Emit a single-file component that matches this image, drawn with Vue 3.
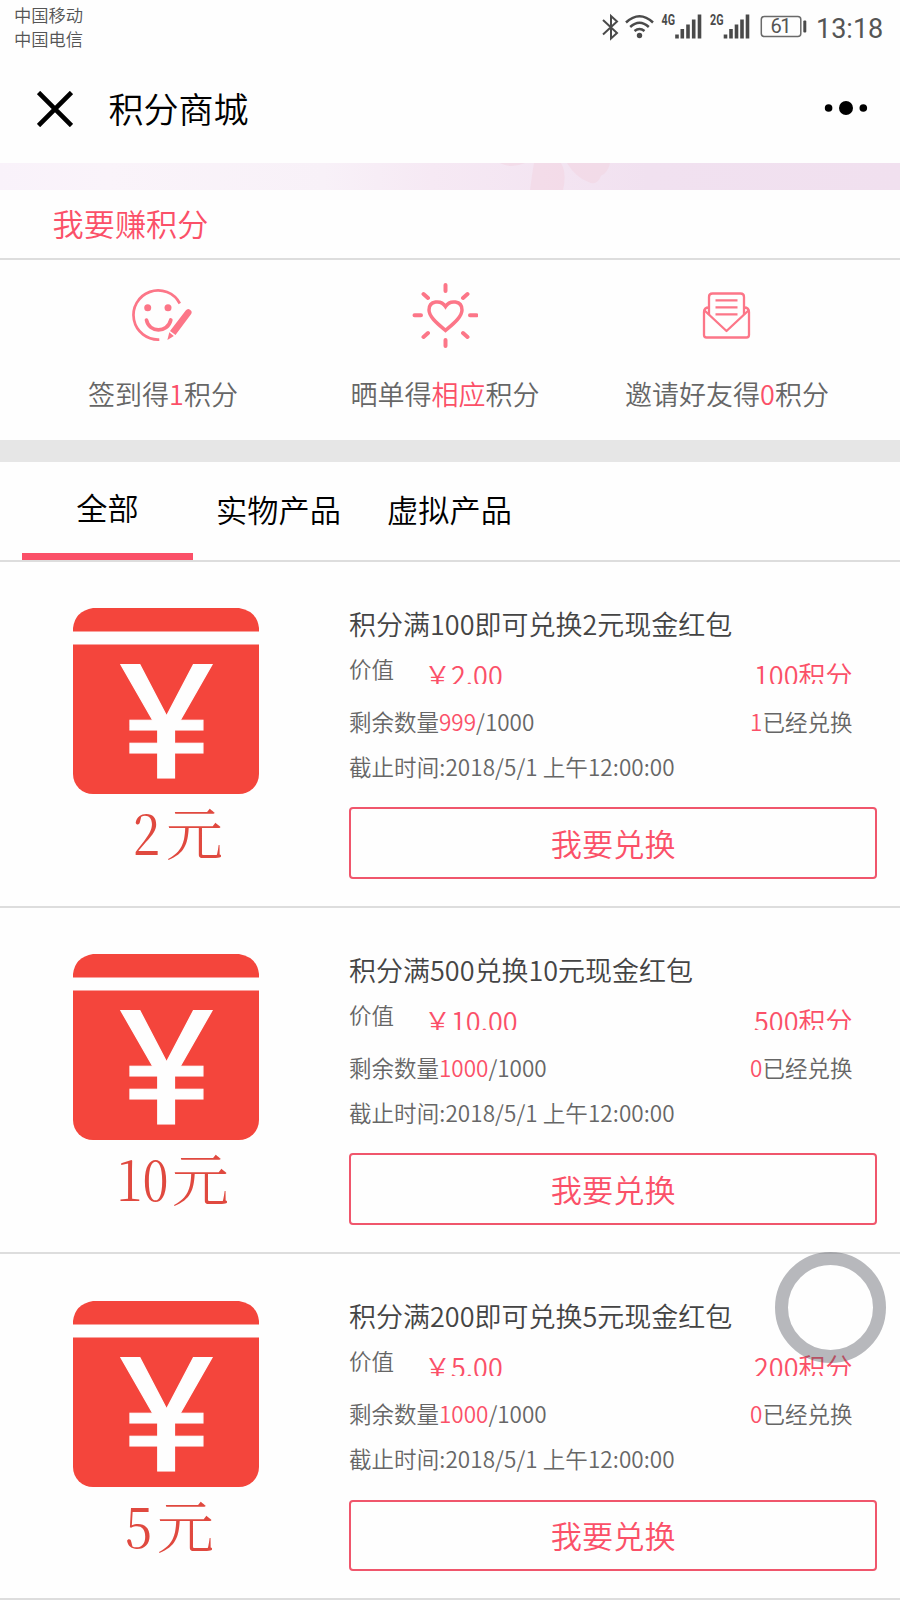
<script setup>
const tabs = ['全部', '实物产品', '虚拟产品']

const products = [
  { face: '2', faceX: 60, faceW: 27, yuanX: 93, title: '积分满100即可兑换2元现金红包', price: '2.00', points: 100, left: 999, used: 1 },
  { face: '10', faceX: 43.5, faceW: 52, yuanX: 99, title: '积分满500兑换10元现金红包', price: '10.00', points: 500, left: 1000, used: 0 },
  { face: '5', faceX: 52, faceW: 27, yuanX: 84, title: '积分满200即可兑换5元现金红包', price: '5.00', points: 200, left: 1000, used: 0 },
]
</script>

<template>
  <div class="screen">
    <header class="status">
      <div class="carriers">
        <div>中国移动</div>
        <div>中国电信</div>
      </div>
      <svg class="status-icons" width="218" height="54" viewBox="0 0 218 54">
        <g fill="none" stroke="#4a4a4a" stroke-width="2">
          <path d="M4 20 L18 33 L12 38.500 V16 L18 21.500 L4 34.500" />
          <path d="M27 22.500 Q40.500 10 54 22.500" stroke-width="2.500" />
          <path d="M31.200 27 Q40.500 18.500 49.800 27" stroke-width="2.500" />
          <path d="M35.500 31 Q40.500 27 45.500 31" stroke-width="2.500" />
        </g>
        <circle cx="40.500" cy="35.500" r="2.700" fill="#4a4a4a" />
        <g stroke="#4a4a4a" stroke-width="3.600">
          <path d="M78 34.500V38.500 M83.300 29V38.500 M89 24.500V38.500 M94.700 19.500V38.500 M100.500 14.500V38.500" />
          <path d="M126.500 34.500V38.500 M132 29V38.500 M137.500 24.500V38.500 M143 19.500V38.500 M148.500 14.500V38.500" />
        </g>
        <g class="net">
          <text x="62.500" y="25" textLength="13.500" lengthAdjust="spacingAndGlyphs">4G</text>
          <text x="111" y="25" textLength="13.500" lengthAdjust="spacingAndGlyphs">2G</text>
        </g>
        <rect x="162.300" y="16.500" width="39.500" height="20" rx="3" fill="none" stroke="#6a6a6a" stroke-width="1.500" />
        <rect x="204.300" y="20.500" width="3" height="12" rx="1" fill="#4a4a4a" />
        <text class="charge" x="171.500" y="33" textLength="21">61</text>
      </svg>
      <div class="clock">13:18</div>
    </header>

    <nav class="nav">
      <svg class="close" width="36" height="36" viewBox="0 0 36 36">
        <path d="M1.500 1.500 L34.500 34.500 M34.500 1.500 L1.500 34.500" stroke="#000" stroke-width="4.700" />
      </svg>
      <h1>积分商城</h1>
      <svg class="more" width="44" height="16" viewBox="0 0 44 16">
        <circle cx="4.600" cy="8" r="3.800" />
        <circle cx="22" cy="8" r="7" />
        <circle cx="39.300" cy="8" r="3.800" />
      </svg>
    </nav>

    <svg class="banner" width="900" height="28" viewBox="0 0 900 28" preserveAspectRatio="none">
      <defs>
        <linearGradient id="bannerFill">
          <stop offset="0" stop-color="#f9f2fa" />
          <stop offset=".12" stop-color="#faf4fa" />
          <stop offset=".36" stop-color="#f8f1f8" />
          <stop offset=".48" stop-color="#f6e9f4" />
          <stop offset=".72" stop-color="#f1e1f0" />
          <stop offset="1" stop-color="#f1e0ef" />
        </linearGradient>
      </defs>
      <rect width="900" height="28" fill="url(#bannerFill)" />
      <g fill="#f3d9e6" opacity=".75">
        <path d="M500 0H525Q511 6 500 0Z" />
        <path d="M534 0H561Q567 10 563 28H530Q532 12 534 0Z" />
        <path d="M567 0H610Q608 10 601 13Q597 24 588 19Q576 15 567 0Z" />
      </g>
    </svg>

    <h2 class="heading">我要赚积分</h2>

    <section class="earn">
      <div class="way">
        <svg width="66" height="66" viewBox="1 0 66 66" fill="none" stroke="#fc7688">
          <path d="M50.800 21.500A24.600 24.600 0 1 0 30.300 57.600" stroke-width="2.700" />
          <circle cx="18.700" cy="25.700" r="3.500" fill="#fc7688" stroke="none" />
          <circle cx="39" cy="25.700" r="3.500" fill="#fc7688" stroke="none" />
          <path d="M17.500 38C20 51 38.500 51.500 41.800 38" stroke-width="3.700" stroke-linecap="round" />
          <path d="M56.700 28.600Q58.700 26 61 27.700Q63.800 29.600 62 32.200L46.500 53L41 49Z" fill="#fc7688" stroke="none" />
          <path d="M40.300 50.300L44.800 54L38.400 58Z" fill="#fc7688" stroke="none" />
        </svg>
        <p>签到得<em>1</em>积分</p>
      </div>
      <div class="way">
        <svg width="66" height="66" viewBox="0 0 66 66" fill="none" stroke="#fc7688" stroke-width="3.500">
          <path d="M33.500 48.500C26 42 17 35 17 28C17 18.500 29 17.500 33.500 24.500C38 17.500 50 18.500 50 28C50 35 41 42 33.500 48.500Z" />
          <path d="M33.500 3V9M33.500 58V64M2.500 33.300H9M58 33.300H64.500M11.500 12L16 16M55.500 12L51 16M11.500 55L16 51M55.500 55L51 51" stroke-width="4" stroke-linecap="round" />
        </svg>
        <p>晒单得<em>相应</em>积分</p>
      </div>
      <div class="way">
        <svg width="66" height="66" viewBox="1 0 66 66" fill="none" stroke="#fc7688" stroke-width="2.300" stroke-linejoin="round">
          <path d="M16 33V15Q16 11.500 19.500 11.500H47.500Q51 11.500 51 15V33" />
          <path d="M16 25.500Q11 25.500 11 30V53Q11 55.500 13.500 55.500H53.500Q56 55.500 56 53V30Q56 25.500 51 25.500" />
          <path d="M11 28L33.500 49L56 28" />
          <path d="M22.500 18.300H44.500M22.500 25.300H44.500M22.500 32.300H44.500" />
        </svg>
        <p>邀请好友得<em>0</em>积分</p>
      </div>
    </section>

    <div class="divider"></div>

    <div class="tabs">
      <div v-for="(tab, i) in tabs" :key="tab" class="tab" :class="{ active: i === 0 }">{{ tab }}</div>
    </div>

    <article v-for="p in products" :key="p.face" class="item">
      <svg class="thumb" width="186" height="262" viewBox="0 0 186 262">
        <path d="M0 23.500V20Q2 3 20 0H166Q184 3 186 20V23.500Z" fill="#f4453c" />
        <path d="M0 36.500H186V166A20 20 0 0 1 166 186H20A20 20 0 0 1 0 166Z" fill="#f4453c" />
        <text class="yen" x="46.500" y="169.500" textLength="94" lengthAdjust="spacingAndGlyphs">¥</text>
        <text class="face" :x="p.faceX" y="247" :textLength="p.faceW" lengthAdjust="spacingAndGlyphs">{{ p.face }}</text>
        <text class="yuan" :x="p.yuanX" y="247">元</text>
      </svg>
      <div class="info">
        <h3>{{ p.title }}</h3>
        <div class="price-row">
          <span class="label">价值</span>
          <span class="price">￥{{ p.price }}</span>
          <span class="points">{{ p.points }}积分</span>
        </div>
        <div class="row">
          <span>剩余数量<em>{{ p.left }}</em>/1000</span>
          <span><em>{{ p.used }}</em>已经兑换</span>
        </div>
        <div class="row deadline">截止时间:2018/5/1 上午12:00:00</div>
        <button>我要兑换</button>
      </div>
    </article>

    <div class="assist"></div>
  </div>
</template>

<style>
body {
  margin: 0;
  background: #fefefe;
}
</style>

<style scoped>
.screen {
  position: relative;
  width: 900px;
  height: 1600px;
  overflow: hidden;
  background: #fefefe;
  font-family: "Noto Sans CJK SC", "Noto Sans", sans-serif;
  font-weight: 350;
  color: #666;
}
h1, h2, h3, p {
  margin: 0;
  font-weight: inherit;
}
em {
  font-style: normal;
  color: #fb5068;
}
.status {
  display: flex;
  height: 54px;
  color: #555;
}
.carriers {
  flex: 1;
  padding: 3px 0 0 14px;
  font-size: 17.3px;
  line-height: 24px;
}
.clock {
  width: 84px;
  font: 400 27px/58px Roboto, sans-serif;
  text-align: left;
  color: #555;
}
.status-icons {
  flex: none;
  margin: 0 -1px 0 1px;
}
.net text {
  font: 700 14.5px Roboto, sans-serif;
  fill: #4a4a4a;
}
.charge {
  font: 400 20px Roboto, sans-serif;
  fill: #555;
}
.nav {
  display: flex;
  align-items: center;
  height: 108.5px;
  color: #000;
}
.close {
  margin: 1px 0 0 36.5px;
}
.nav h1 {
  flex: 1;
  margin-left: 36px;
  font-size: 35px;
  line-height: 50px;
}
.more {
  margin-right: 32px;
}
.banner {
  display: block;
  height: 27.5px;
}
.heading {
  box-sizing: border-box;
  height: 70px;
  padding-left: 52.5px;
  border-bottom: 2px solid #ddd;
  font-size: 31.2px;
  line-height: 66px;
  color: #fb5068;
}
.earn {
  display: flex;
  box-sizing: border-box;
  height: 180px;
  padding: 22px 32px 0 22px;
}
.way {
  flex: none;
  width: 282px;
  text-align: center;
}
.way svg {
  display: block;
  margin: 0 auto;
}
.way p {
  margin-top: 25.5px;
  font-size: 27px;
  line-height: 40px;
}
.divider {
  height: 22px;
  background: #e6e6e6;
}
.tabs {
  display: flex;
  box-sizing: border-box;
  height: 99.5px;
  padding-left: 22px;
  border-bottom: 2px solid #ddd;
  color: #000;
}
.tab {
  box-sizing: border-box;
  width: 171px;
  font-size: 31.2px;
  line-height: 94px;
  text-align: center;
}
.tab.active {
  border-bottom: 7px solid #fb5068;
  line-height: 90px;
}
.item {
  display: flex;
  box-sizing: border-box;
  height: 346.3px;
  border-bottom: 2px solid #ddd;
}
.thumb {
  flex: none;
  margin: 46.5px 89.8px 0 73.2px;
}
.yen {
  font: 400 159px Roboto, sans-serif;
  fill: #fefefe;
  stroke: #fefefe;
  stroke-width: 1;
}
.face {
  font: 400 57px "Noto Serif CJK SC", "Liberation Serif", serif;
  fill: #e0493f;
}
.yuan {
  font: 300 57px "Noto Serif CJK SC", "Noto Sans CJK SC", serif;
  fill: #e0493f;
}
.info {
  width: 528.5px;
  padding-top: 42px;
}
.info h3 {
  font-size: 27px;
  line-height: 40px;
  color: #444;
}
.price-row {
  display: flex;
  height: 40px;
  overflow: hidden;
  font-size: 27px;
  line-height: 61px;
  color: #fb5068;
}
.label {
  width: 75px;
  font-size: 22.5px;
  line-height: 48px;
  color: #666;
}
.points {
  margin-left: auto;
  margin-right: 25px;
}
.row {
  display: flex;
  justify-content: space-between;
  padding-right: 25px;
  font-size: 22.5px;
  line-height: 45px;
}
.price-row + .row {
  margin-top: 15px;
}
.deadline {
  letter-spacing: 0.07px;
}
button {
  display: block;
  box-sizing: border-box;
  width: 528.5px;
  height: 71.5px;
  margin: 18.5px 0 0;
  padding: 0 0 1px;
  border: 2px solid #f0566c;
  border-radius: 4px;
  background: transparent;
  font: inherit;
  font-size: 31.2px;
  line-height: 65px;
  color: #fb5068;
}
.assist {
  position: absolute;
  left: 775px;
  top: 1252px;
  box-sizing: border-box;
  width: 111px;
  height: 111px;
  border: 13.5px solid rgba(78, 80, 90, .4);
  border-radius: 50%;
}
</style>
